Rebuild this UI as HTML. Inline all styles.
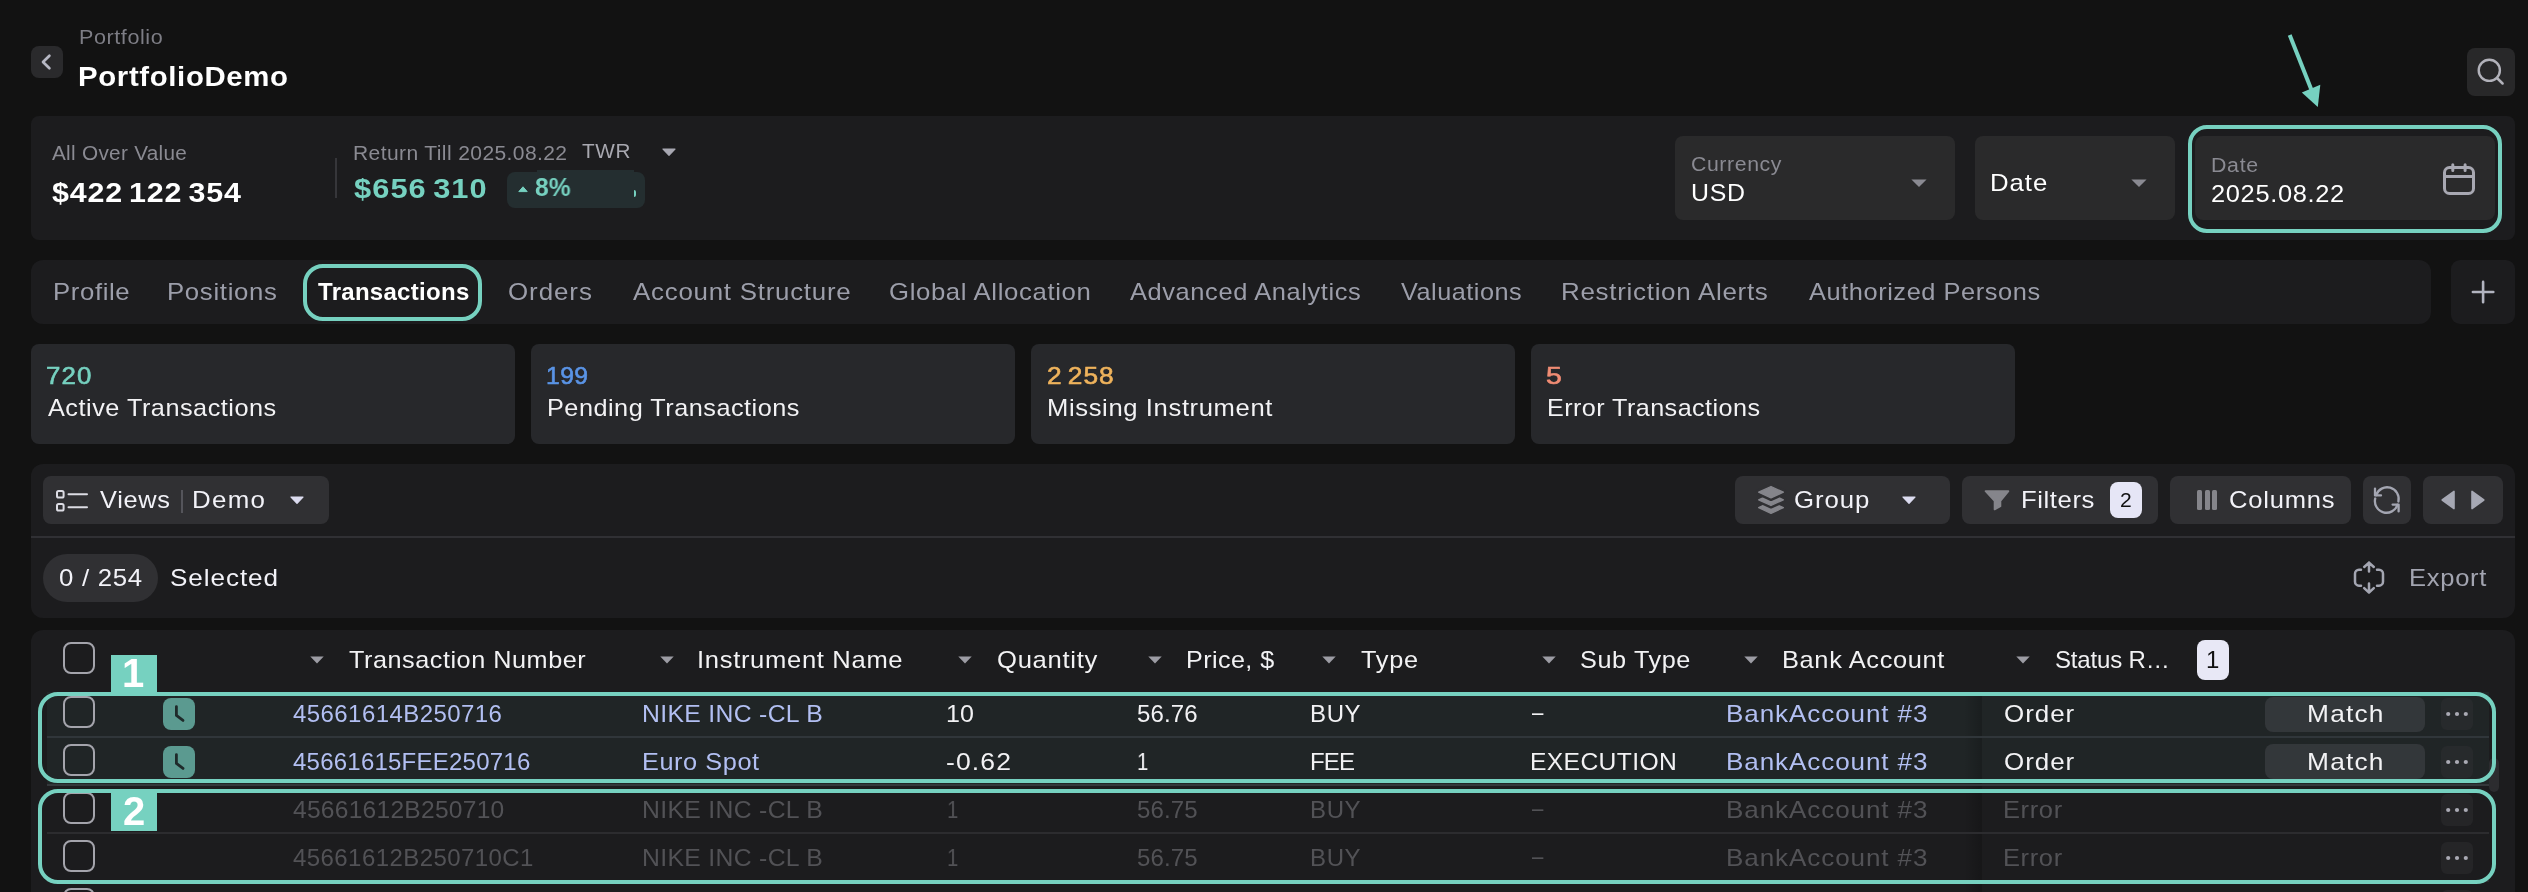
<!DOCTYPE html>
<html lang="en"><head><meta charset="utf-8"><title>PortfolioDemo – Transactions</title>
<style>
html,body{margin:0;padding:0;background:#121212;}
#app{display:block;position:relative;width:2528px;height:892px;overflow:hidden;background:#121212;font-family:"Liberation Sans",sans-serif;}
.b{position:absolute;box-sizing:border-box;}
.t{position:absolute;white-space:pre;transform-origin:0 0;will-change:transform;font-family:"Liberation Sans",sans-serif;}
.panel{background:#1c1c1e;}
.inp{background:#2a2a2b;border-radius:8px;}
.card{background:#27282b;border-radius:8px;top:344px;height:100px;width:484px;}
.btn{background:#303033;border-radius:8px;top:476px;height:48px;}
.hl{border:4px solid #76d1c0;}
.cb{width:32px;height:32px;left:63px;border:2px solid #a4a4ac;border-radius:8px;}
.sep{height:2px;background:#2c2c2f;left:47px;width:2442px;}
.dots{width:32px;height:32px;left:2441px;border-radius:6px;background:#252527;}
.match{left:2265px;width:160px;height:35px;border-radius:8px;background:#33373a;}
.clk{left:163px;width:32px;height:32px;border-radius:8px;background:#5b9a90;}
svg{position:absolute;overflow:visible;}

</style></head>
<body>
<main id="app">
<header class="page-header">
<!-- header -->
<div class="b" style="left:31px;top:46px;width:32px;height:32px;border-radius:8px;background:#2a2a2c;"></div>
<svg style="left:31px;top:46px" width="32" height="32" viewBox="0 0 32 32"><path d="M18.4 9.7 L12 16 L18.4 22.3" fill="none" stroke="#b6b8c4" stroke-width="2.7" stroke-linecap="round" stroke-linejoin="round"/></svg>
<div class="b" style="left:2467px;top:48px;width:48px;height:48px;border-radius:8px;background:#282829;"></div>
<svg style="left:2467px;top:48px" width="48" height="48" viewBox="0 0 48 48"><circle cx="22.3" cy="22.3" r="10.6" fill="none" stroke="#b2b2ba" stroke-width="2.4"/><path d="M30 30 L35.6 35.5" stroke="#b2b2ba" stroke-width="2.5" stroke-linecap="round"/></svg>
<!-- pointer arrow -->
<svg style="left:0;top:0" width="2528" height="140" viewBox="0 0 2528 140"><path d="M2289.7 35 L2311.5 90" stroke="#76d1c0" stroke-width="4" fill="none"/><path d="M2301.8 92.5 L2320.3 84.7 L2317.8 107 Z" fill="#76d1c0"/></svg>
<span class="t" style="left:78.6px;top:27.1px;font-size:20px;line-height:20px;color:#7d7d85;letter-spacing:0.53px;transform:scaleX(1.078);">Portfolio</span>
<span class="t" style="left:78.4px;top:62.5px;font-size:28px;line-height:28px;color:#ffffff;font-weight:700;letter-spacing:0.61px;transform:scaleX(1.049);">PortfolioDemo</span>
</header>
<section class="summary">
<!-- summary panel -->
<div class="b panel" style="left:31px;top:116px;width:2484px;height:124px;border-radius:8px;"></div>
<div class="b" style="left:335px;top:158px;width:2px;height:40px;background:#36363a;"></div>
<svg style="left:662px;top:148px" width="14" height="8" viewBox="0 0 14 8"><path d="M1 1 L13 1 L7 7.3 Z" fill="#a8a8b2" stroke="#a8a8b2" stroke-width="1.2" stroke-linejoin="round"/></svg>
<div class="b" style="left:507px;top:172px;width:138px;height:36px;border-radius:8px;background:#242e30;"></div>
<div class="b" style="left:537px;top:170px;width:97px;height:4px;background:#242e30;"></div>
<svg style="left:518px;top:186px" width="10" height="6" viewBox="0 0 10 6"><path d="M0.8 5.6 L5 0.8 L9.2 5.6 Z" fill="#76d1c0" stroke="#76d1c0" stroke-width="1" stroke-linejoin="round"/></svg>
<div class="b" style="left:633.6px;top:189.6px;width:2.4px;height:7px;border-radius:0 3px 3px 0;background:#76d1c0;"></div>
<div class="b inp" style="left:1675px;top:136px;width:280px;height:84px;"></div>
<svg style="left:1911px;top:179px" width="16" height="8" viewBox="0 0 16 8"><path d="M0.4 0.4 L15.6 0.4 L8 8 Z" fill="#8a8a92"/></svg>
<div class="b inp" style="left:1975px;top:136px;width:200px;height:84px;"></div>
<svg style="left:2131px;top:179px" width="16" height="8" viewBox="0 0 16 8"><path d="M0.4 0.4 L15.6 0.4 L8 8 Z" fill="#8a8a92"/></svg>
<div class="b inp" style="left:2195px;top:136px;width:300px;height:84px;"></div>
<div class="b hl" style="left:2188px;top:124.5px;width:314px;height:108px;border-radius:19px;"></div>
<svg style="left:2443px;top:163px" width="32" height="32" viewBox="0 0 32 32" fill="none" stroke="#a8a8b2" stroke-width="3" stroke-linecap="round"><rect x="1.5" y="4.5" width="29" height="26" rx="5"/><path d="M2 13.4 H30"/><path d="M9.8 1.7 V7.4 M22.1 1.7 V7.4"/></svg>
<span class="t" style="left:51.8px;top:143.1px;font-size:20px;line-height:20px;color:#8a8a92;letter-spacing:0.28px;transform:scaleX(1.037);">All Over Value</span>
<span class="t" style="left:51.7px;top:177.8px;font-size:28.5px;line-height:28.5px;color:#ffffff;font-weight:700;letter-spacing:0.79px;transform:scaleX(1.067);word-spacing:-3px;">$422 122 354</span>
<span class="t" style="left:352.6px;top:143.1px;font-size:20px;line-height:20px;color:#8a8a92;letter-spacing:0.37px;transform:scaleX(1.052);">Return Till 2025.08.22</span>
<span class="t" style="left:581.5px;top:141.1px;font-size:20px;line-height:20px;color:#a8a8b0;letter-spacing:0.64px;transform:scaleX(1.036);">TWR</span>
<span class="t" style="left:353.6px;top:173.8px;font-size:28.5px;line-height:28.5px;color:#76d1c0;font-weight:700;letter-spacing:0.99px;transform:scaleX(1.080);word-spacing:-3px;">$656 310</span>
<span class="t" style="left:535.1px;top:174.6px;font-size:25px;line-height:25px;color:#76d1c0;font-weight:700;transform:scaleX(0.983);">8%</span>
<span class="t" style="left:1690.8px;top:154.1px;font-size:20px;line-height:20px;color:#8a8a92;letter-spacing:0.56px;transform:scaleX(1.063);">Currency</span>
<span class="t" style="left:1690.6px;top:180.6px;font-size:24px;line-height:24px;color:#ffffff;letter-spacing:0.68px;transform:scaleX(1.036);">USD</span>
<span class="t" style="left:1989.9px;top:170.6px;font-size:24px;line-height:24px;color:#ffffff;letter-spacing:0.89px;transform:scaleX(1.073);">Date</span>
<span class="t" style="left:2210.8px;top:155.1px;font-size:20px;line-height:20px;color:#8a8a92;letter-spacing:0.67px;transform:scaleX(1.066);">Date</span>
<span class="t" style="left:2210.8px;top:181.6px;font-size:24px;line-height:24px;color:#ffffff;letter-spacing:0.61px;transform:scaleX(1.060);">2025.08.22</span>
</section>
<nav class="tabs">
<!-- tabs -->
<div class="b panel" style="left:31px;top:260px;width:2400px;height:64px;border-radius:12px;"></div>
<div class="b hl" style="left:303px;top:264px;width:179px;height:57px;border-radius:20px;"></div>
<div class="b panel" style="left:2451px;top:260px;width:64px;height:64px;border-radius:9px;"></div>
<svg style="left:2472px;top:281px" width="22" height="22" viewBox="0 0 22 22"><path d="M11.1 0.9 V21.3 M0.9 11 H21.3" stroke="#b2b4c0" stroke-width="2.6" stroke-linecap="round" fill="none"/></svg>
<span class="t" style="left:52.5px;top:279.6px;font-size:24px;line-height:24px;color:#9c9eaa;letter-spacing:0.59px;transform:scaleX(1.071);">Profile</span>
<span class="t" style="left:167.4px;top:279.6px;font-size:24px;line-height:24px;color:#9c9eaa;letter-spacing:0.65px;transform:scaleX(1.072);">Positions</span>
<span class="t" style="left:508.4px;top:279.6px;font-size:24px;line-height:24px;color:#9c9eaa;letter-spacing:0.86px;transform:scaleX(1.080);">Orders</span>
<span class="t" style="left:632.5px;top:279.6px;font-size:24px;line-height:24px;color:#9c9eaa;letter-spacing:0.70px;transform:scaleX(1.078);">Account Structure</span>
<span class="t" style="left:889.2px;top:279.6px;font-size:24px;line-height:24px;color:#9c9eaa;letter-spacing:0.60px;transform:scaleX(1.071);">Global Allocation</span>
<span class="t" style="left:1130.4px;top:279.6px;font-size:24px;line-height:24px;color:#9c9eaa;letter-spacing:0.56px;transform:scaleX(1.060);">Advanced Analytics</span>
<span class="t" style="left:1401.4px;top:279.6px;font-size:24px;line-height:24px;color:#9c9eaa;letter-spacing:0.49px;transform:scaleX(1.052);">Valuations</span>
<span class="t" style="left:1560.8px;top:279.6px;font-size:24px;line-height:24px;color:#9c9eaa;letter-spacing:0.65px;transform:scaleX(1.082);">Restriction Alerts</span>
<span class="t" style="left:1808.8px;top:279.6px;font-size:24px;line-height:24px;color:#9c9eaa;letter-spacing:0.54px;transform:scaleX(1.057);">Authorized Persons</span>
<span class="t" style="left:317.7px;top:279.6px;font-size:24px;line-height:24px;color:#ffffff;font-weight:700;letter-spacing:0.29px;">Transactions</span>
</nav>
<section class="cards">
<!-- cards -->
<div class="b card" style="left:31px;"></div>
<div class="b card" style="left:531px;"></div>
<div class="b card" style="left:1031px;"></div>
<div class="b card" style="left:1531px;"></div>
<span class="t" style="left:45.9px;top:363.6px;font-size:24px;line-height:24px;color:#76d1c0;letter-spacing:1.09px;transform:scaleX(1.076);-webkit-text-stroke:0.6px #76d1c0;">720</span>
<span class="t" style="left:47.5px;top:395.6px;font-size:24px;line-height:24px;color:#f2f2f4;letter-spacing:0.48px;transform:scaleX(1.053);">Active Transactions</span>
<span class="t" style="left:545.6px;top:363.6px;font-size:24px;line-height:24px;color:#5a94e6;letter-spacing:0.42px;transform:scaleX(1.028);-webkit-text-stroke:0.6px #5a94e6;">199</span>
<span class="t" style="left:546.9px;top:395.6px;font-size:24px;line-height:24px;color:#f2f2f4;letter-spacing:0.48px;transform:scaleX(1.052);">Pending Transactions</span>
<span class="t" style="left:1046.7px;top:363.6px;font-size:24px;line-height:24px;color:#efb35c;letter-spacing:0.97px;transform:scaleX(1.095);-webkit-text-stroke:0.6px #efb35c;word-spacing:-3px;">2 258</span>
<span class="t" style="left:1046.9px;top:395.6px;font-size:24px;line-height:24px;color:#f2f2f4;letter-spacing:0.59px;transform:scaleX(1.066);">Missing Instrument</span>
<span class="t" style="left:1546.4px;top:363.6px;font-size:24px;line-height:24px;color:#f08c74;transform:scaleX(1.185);-webkit-text-stroke:0.6px #f08c74;">5</span>
<span class="t" style="left:1546.9px;top:395.6px;font-size:24px;line-height:24px;color:#f2f2f4;letter-spacing:0.42px;transform:scaleX(1.048);">Error Transactions</span>
</section>
<section class="toolbar">
<!-- toolbar -->
<div class="b panel" style="left:31px;top:464px;width:2484px;height:154px;border-radius:12px;"></div>
<div class="b" style="left:31px;top:536px;width:2484px;height:2px;background:#303034;"></div>
<div class="b btn" style="left:43px;width:286px;"></div>
<svg style="left:56px;top:490px" width="32" height="22" viewBox="0 0 32 22" fill="none" stroke="#dcdce4" stroke-width="2"><rect x="1" y="1" width="6.6" height="6.6" rx="1.6"/><rect x="1" y="14" width="6.6" height="6.6" rx="1.6"/><path d="M12.5 4.3 H31 M12.5 17.3 H31" stroke-linecap="round"/></svg>
<div class="b" style="left:180.5px;top:490px;width:2px;height:23px;background:#55555b;"></div>
<svg style="left:290px;top:496px" width="14" height="8" viewBox="0 0 14 8"><path d="M1 1 L13 1 L7 7.4 Z" fill="#dcdcf0" stroke="#dcdcf0" stroke-width="1.2" stroke-linejoin="round"/></svg>
<div class="b" style="left:43px;top:554px;width:115px;height:48px;border-radius:24px;background:#303033;"></div>

<div class="b btn" style="left:1735px;width:215px;"></div>
<svg style="left:1757px;top:486px" width="28" height="28" viewBox="0 0 28 28" stroke-linejoin="round"><path d="M14 15.600000000000001 L27 21.6 L14 27.6 L1 21.6 Z" fill="#85858b" stroke="#85858b" stroke-width="1.4" transform="translate(14 21.6) scale(0.95) translate(-14 -21.6)"/><path d="M14 7.800000000000001 L27 13.8 L14 19.8 L1 13.8 Z" fill="#303033" stroke="#303033" stroke-width="5.6"/><path d="M14 7.800000000000001 L27 13.8 L14 19.8 L1 13.8 Z" fill="#85858b" stroke="#85858b" stroke-width="1.4" transform="translate(14 13.8) scale(0.95) translate(-14 -13.8)"/><path d="M14 0.20000000000000018 L27 6.2 L14 12.2 L1 6.2 Z" fill="#303033" stroke="#303033" stroke-width="5.6"/><path d="M14 0.20000000000000018 L27 6.2 L14 12.2 L1 6.2 Z" fill="#85858b" stroke="#85858b" stroke-width="1.4" transform="translate(14 6.2) scale(0.95) translate(-14 -6.2)"/></svg>
<svg style="left:1902px;top:496px" width="14" height="8" viewBox="0 0 14 8"><path d="M1 1 L13 1 L7 7.4 Z" fill="#dcdcf0" stroke="#dcdcf0" stroke-width="1.2" stroke-linejoin="round"/></svg>
<div class="b btn" style="left:1962px;width:196px;"></div>
<svg style="left:1984px;top:490px" width="26" height="21" viewBox="0 0 26 21"><path d="M1.6 1.2 H24.4 L16.4 11 V16.2 L10.6 19.4 V11 Z" fill="#85858b" stroke="#85858b" stroke-width="1.8" stroke-linejoin="round"/></svg>
<div class="b" style="left:2110px;top:482px;width:32px;height:36px;border-radius:8px;background:#e6e6f6;"></div>
<div class="b btn" style="left:2170px;width:181px;"></div>
<div class="b" style="left:2197px;top:490px;width:5px;height:20px;border-radius:1.5px;background:#85858b;"></div>
<div class="b" style="left:2204.5px;top:490px;width:5px;height:20px;border-radius:1.5px;background:#85858b;"></div>
<div class="b" style="left:2212px;top:490px;width:5px;height:20px;border-radius:1.5px;background:#85858b;"></div>
<div class="b btn" style="left:2363px;width:48px;"></div>
<svg style="left:0;top:0" width="2528" height="892" viewBox="0 0 2528 892" fill="none" stroke="#a4a6b2" stroke-width="2.3" stroke-linecap="round" stroke-linejoin="round"><path d="M2398.4 501.5 A11.6 11.6 0 0 0 2376.1 495.2"/><path d="M2375 488.6 V495.4 H2381"/><path d="M2375.2 498.5 A11.6 11.6 0 0 0 2397.5 504.8"/><path d="M2398.6 511.4 V504.6 H2392.6"/></svg>
<div class="b btn" style="left:2423px;width:80px;"></div>
<svg style="left:2441px;top:490px" width="14" height="20" viewBox="0 0 14 20"><path d="M13 1.4 V18.6 L1.2 10 Z" fill="#a6a8b4" stroke="#a6a8b4" stroke-width="1.6" stroke-linejoin="round"/></svg>
<svg style="left:2471px;top:490px" width="14" height="20" viewBox="0 0 14 20"><path d="M1 1.4 V18.6 L12.8 10 Z" fill="#a6a8b4" stroke="#a6a8b4" stroke-width="1.6" stroke-linejoin="round"/></svg>
<!-- export icon -->
<svg style="left:2353px;top:560px" width="32" height="35" viewBox="0 0 32 35" fill="none" stroke="#a4a6b2" stroke-width="2.5" stroke-linecap="round" stroke-linejoin="round"><path d="M16 2.6 V11.6 M11.2 7 L16 2.6 L20.8 7"/><path d="M16 32.6 V23.6 M11.2 28.2 L16 32.6 L20.8 28.2"/><path d="M8 9.75 H6 A4 4 0 0 0 2 13.75 V21.65 A4 4 0 0 0 6 25.65 H8"/><path d="M24 9.75 H26 A4 4 0 0 1 30 13.75 V21.65 A4 4 0 0 1 26 25.65 H24"/></svg>
<span class="t" style="left:99.9px;top:487.6px;font-size:24px;line-height:24px;color:#f2f2f8;letter-spacing:0.68px;transform:scaleX(1.056);">Views</span>
<span class="t" style="left:191.8px;top:487.6px;font-size:24px;line-height:24px;color:#f2f2f8;letter-spacing:1.20px;transform:scaleX(1.078);">Demo</span>
<span class="t" style="left:58.8px;top:565.5px;font-size:24px;line-height:24px;color:#f2f2f8;letter-spacing:0.67px;transform:scaleX(1.074);">0 / 254</span>
<span class="t" style="left:169.7px;top:565.5px;font-size:24px;line-height:24px;color:#f2f2f8;letter-spacing:0.85px;transform:scaleX(1.087);">Selected</span>
<span class="t" style="left:1794.3px;top:487.6px;font-size:24px;line-height:24px;color:#f2f2f8;letter-spacing:0.90px;transform:scaleX(1.073);">Group</span>
<span class="t" style="left:2020.5px;top:487.6px;font-size:24px;line-height:24px;color:#f2f2f8;letter-spacing:0.55px;transform:scaleX(1.069);">Filters</span>
<span class="t" style="left:2120.1px;top:490.1px;font-size:20px;line-height:20px;color:#111111;transform:scaleX(1.053);">2</span>
<span class="t" style="left:2229.3px;top:487.6px;font-size:24px;line-height:24px;color:#f2f2f8;letter-spacing:0.75px;transform:scaleX(1.063);">Columns</span>
<span class="t" style="left:2408.8px;top:565.5px;font-size:24px;line-height:24px;color:#a2a4b0;letter-spacing:0.67px;transform:scaleX(1.064);">Export</span>
</section>
<section class="grid">
<!-- table -->
<div class="b panel" style="left:31px;top:630px;width:2484px;height:280px;border-radius:12px;"></div>
<!-- highlighted rows bg -->
<div class="b" style="left:47px;top:692px;width:2442px;height:93px;background:#202526;"></div>
<!-- pinned col shadow -->
<div class="b" style="left:1964px;top:694px;width:18px;height:198px;background:linear-gradient(90deg,rgba(0,0,0,0),rgba(0,0,0,0.2));"></div>
<div class="b sep" style="top:736px;background:#30363a;"></div>
<div class="b sep" style="top:784px;background:#34383b;"></div>
<div class="b sep" style="top:832px;"></div>
<div class="b sep" style="top:880px;"></div>
<!-- scroll thumb -->
<div class="b" style="left:2489px;top:758px;width:10px;height:34px;border-radius:5px;background:#2c2c2f;"></div>
<!-- checkboxes -->
<div class="b cb" style="top:642px;"></div>
<div class="b cb" style="top:696px;"></div>
<div class="b cb" style="top:744px;"></div>
<div class="b cb" style="top:792px;"></div>
<div class="b cb" style="top:840px;"></div>
<div class="b cb" style="top:888px;"></div>
<!-- header carets -->
<svg style="left:310px;top:656px" width="14" height="8" viewBox="0 0 14 8"><path d="M0.3 0.4 L13.7 0.4 L7 7.6 Z" fill="#9c9ca4"/></svg>
<svg style="left:660px;top:656px" width="14" height="8" viewBox="0 0 14 8"><path d="M0.3 0.4 L13.7 0.4 L7 7.6 Z" fill="#9c9ca4"/></svg>
<svg style="left:958px;top:656px" width="14" height="8" viewBox="0 0 14 8"><path d="M0.3 0.4 L13.7 0.4 L7 7.6 Z" fill="#9c9ca4"/></svg>
<svg style="left:1148px;top:656px" width="14" height="8" viewBox="0 0 14 8"><path d="M0.3 0.4 L13.7 0.4 L7 7.6 Z" fill="#9c9ca4"/></svg>
<svg style="left:1322px;top:656px" width="14" height="8" viewBox="0 0 14 8"><path d="M0.3 0.4 L13.7 0.4 L7 7.6 Z" fill="#9c9ca4"/></svg>
<svg style="left:1542px;top:656px" width="14" height="8" viewBox="0 0 14 8"><path d="M0.3 0.4 L13.7 0.4 L7 7.6 Z" fill="#9c9ca4"/></svg>
<svg style="left:1744px;top:656px" width="14" height="8" viewBox="0 0 14 8"><path d="M0.3 0.4 L13.7 0.4 L7 7.6 Z" fill="#9c9ca4"/></svg>
<svg style="left:2016px;top:656px" width="14" height="8" viewBox="0 0 14 8"><path d="M0.3 0.4 L13.7 0.4 L7 7.6 Z" fill="#9c9ca4"/></svg>
<div class="b" style="left:2197px;top:640px;width:32px;height:40px;border-radius:8px;background:#e8e8f6;"></div>
<!-- clock icons -->
<div class="b clk" style="top:698px;"></div>
<svg style="left:163px;top:698px" width="32" height="32" viewBox="0 0 32 32"><path d="M13.4 8.6 V17.4 L20 22.4" fill="none" stroke="#1f2a2a" stroke-width="2.8" stroke-linecap="round" stroke-linejoin="round"/></svg>
<div class="b clk" style="top:746px;"></div>
<svg style="left:163px;top:746px" width="32" height="32" viewBox="0 0 32 32"><path d="M13.4 8.6 V17.4 L20 22.4" fill="none" stroke="#1f2a2a" stroke-width="2.8" stroke-linecap="round" stroke-linejoin="round"/></svg>
<!-- match buttons -->
<div class="b match" style="top:697px;"></div>
<div class="b match" style="top:744px;"></div>
<!-- dots buttons -->
<div class="b dots" style="top:698px;background:#272a2c;"></div>
<div class="b dots" style="top:746px;background:#272a2c;"></div>
<div class="b dots" style="top:794px;"></div>
<div class="b dots" style="top:842px;"></div>
<div class="b dots" style="top:890px;"></div>
<svg style="left:2441px;top:698px" width="32" height="32" viewBox="0 0 32 32" fill="#aaaab4"><circle cx="7.2" cy="16" r="2.1"/><circle cx="16" cy="16" r="2.1"/><circle cx="24.8" cy="16" r="2.1"/></svg>
<svg style="left:2441px;top:746px" width="32" height="32" viewBox="0 0 32 32" fill="#aaaab4"><circle cx="7.2" cy="16" r="2.1"/><circle cx="16" cy="16" r="2.1"/><circle cx="24.8" cy="16" r="2.1"/></svg>
<svg style="left:2441px;top:794px" width="32" height="32" viewBox="0 0 32 32" fill="#aaaab4"><circle cx="7.2" cy="16" r="2.1"/><circle cx="16" cy="16" r="2.1"/><circle cx="24.8" cy="16" r="2.1"/></svg>
<svg style="left:2441px;top:842px" width="32" height="32" viewBox="0 0 32 32" fill="#aaaab4"><circle cx="7.2" cy="16" r="2.1"/><circle cx="16" cy="16" r="2.1"/><circle cx="24.8" cy="16" r="2.1"/></svg>
<!-- annotation badges -->
<div class="b" style="left:111px;top:655px;width:46px;height:38px;background:#76d1c0;"></div>
<div class="b" style="left:111px;top:791px;width:46px;height:40px;background:#76d1c0;"></div>
<!-- annotation boxes -->
<div class="b hl" style="left:38px;top:692px;width:2458px;height:91px;border-radius:20px;"></div>
<div class="b hl" style="left:38px;top:789px;width:2458px;height:95px;border-radius:20px;"></div>
<span class="t" style="left:349.1px;top:647.5px;font-size:24px;line-height:24px;color:#f2f2f4;letter-spacing:0.51px;transform:scaleX(1.051);">Transaction Number</span>
<span class="t" style="left:697.3px;top:647.5px;font-size:24px;line-height:24px;color:#f2f2f4;letter-spacing:0.64px;transform:scaleX(1.065);">Instrument Name</span>
<span class="t" style="left:996.7px;top:647.5px;font-size:24px;line-height:24px;color:#f2f2f4;letter-spacing:0.66px;transform:scaleX(1.068);">Quantity</span>
<span class="t" style="left:1185.7px;top:647.5px;font-size:24px;line-height:24px;color:#f2f2f4;letter-spacing:0.41px;transform:scaleX(1.046);">Price, $</span>
<span class="t" style="left:1360.7px;top:647.5px;font-size:24px;line-height:24px;color:#f2f2f4;letter-spacing:0.72px;transform:scaleX(1.055);">Type</span>
<span class="t" style="left:1580.4px;top:647.5px;font-size:24px;line-height:24px;color:#f2f2f4;letter-spacing:0.57px;transform:scaleX(1.052);">Sub Type</span>
<span class="t" style="left:1782.1px;top:647.5px;font-size:24px;line-height:24px;color:#f2f2f4;letter-spacing:0.60px;transform:scaleX(1.059);">Bank Account</span>
<span class="t" style="left:2054.6px;top:647.5px;font-size:24px;line-height:24px;color:#f2f2f4;letter-spacing:-0.17px;">Status R…</span>
<span class="t" style="left:2206.2px;top:647.5px;font-size:24px;line-height:24px;color:#111111;transform:scaleX(0.965);">1</span>
<span class="t" style="left:292.7px;top:701.5px;font-size:24px;line-height:24px;color:#b2bff2;letter-spacing:0.43px;">45661614B250716</span>
<span class="t" style="left:642.2px;top:701.5px;font-size:24px;line-height:24px;color:#b2bff2;letter-spacing:0.32px;transform:scaleX(1.031);">NIKE INC -CL B</span>
<span class="t" style="left:945.7px;top:701.5px;font-size:24px;line-height:24px;color:#f2f2f4;transform:scaleX(1.044);">10</span>
<span class="t" style="left:1137.0px;top:701.5px;font-size:24px;line-height:24px;color:#f2f2f4;letter-spacing:0.14px;">56.76</span>
<span class="t" style="left:1310.3px;top:701.5px;font-size:24px;line-height:24px;color:#f2f2f4;letter-spacing:0.62px;">BUY</span>
<span class="t" style="left:1531.8px;top:699.5px;font-size:24px;line-height:24px;color:#f2f2f4;transform:scaleX(0.850);">–</span>
<span class="t" style="left:1725.7px;top:701.5px;font-size:24px;line-height:24px;color:#b2bff2;letter-spacing:0.84px;transform:scaleX(1.085);">BankAccount #3</span>
<span class="t" style="left:2004.2px;top:701.5px;font-size:24px;line-height:24px;color:#f2f2f4;letter-spacing:0.91px;transform:scaleX(1.081);">Order</span>
<span class="t" style="left:2306.5px;top:701.5px;font-size:24px;line-height:24px;color:#f2f2f4;letter-spacing:1.11px;transform:scaleX(1.096);">Match</span>
<span class="t" style="left:292.7px;top:749.5px;font-size:24px;line-height:24px;color:#b2bff2;letter-spacing:0.23px;">45661615FEE250716</span>
<span class="t" style="left:642.1px;top:749.5px;font-size:24px;line-height:24px;color:#b2bff2;letter-spacing:0.55px;transform:scaleX(1.054);">Euro Spot</span>
<span class="t" style="left:946.4px;top:749.5px;font-size:24px;line-height:24px;color:#f2f2f4;letter-spacing:1.02px;transform:scaleX(1.105);">-0.62</span>
<span class="t" style="left:1137.4px;top:749.5px;font-size:24px;line-height:24px;color:#f2f2f4;transform:scaleX(0.850);">1</span>
<span class="t" style="left:1310.3px;top:749.5px;font-size:24px;line-height:24px;color:#f2f2f4;letter-spacing:-0.84px;">FEE</span>
<span class="t" style="left:1529.8px;top:749.5px;font-size:24px;line-height:24px;color:#f2f2f4;letter-spacing:0.36px;transform:scaleX(1.027);">EXECUTION</span>
<span class="t" style="left:1725.7px;top:749.5px;font-size:24px;line-height:24px;color:#b2bff2;letter-spacing:0.84px;transform:scaleX(1.085);">BankAccount #3</span>
<span class="t" style="left:2004.2px;top:749.5px;font-size:24px;line-height:24px;color:#f2f2f4;letter-spacing:0.91px;transform:scaleX(1.081);">Order</span>
<span class="t" style="left:2306.5px;top:749.5px;font-size:24px;line-height:24px;color:#f2f2f4;letter-spacing:1.11px;transform:scaleX(1.096);">Match</span>
<span class="t" style="left:292.7px;top:797.5px;font-size:24px;line-height:24px;color:#525256;letter-spacing:0.26px;transform:scaleX(1.023);">45661612B250710</span>
<span class="t" style="left:642.2px;top:797.5px;font-size:24px;line-height:24px;color:#525256;letter-spacing:0.32px;transform:scaleX(1.031);">NIKE INC -CL B</span>
<span class="t" style="left:947.4px;top:797.5px;font-size:24px;line-height:24px;color:#525256;transform:scaleX(0.850);">1</span>
<span class="t" style="left:1137.0px;top:797.5px;font-size:24px;line-height:24px;color:#525256;letter-spacing:0.13px;">56.75</span>
<span class="t" style="left:1310.3px;top:797.5px;font-size:24px;line-height:24px;color:#525256;letter-spacing:0.62px;">BUY</span>
<span class="t" style="left:1531.8px;top:795.5px;font-size:24px;line-height:24px;color:#525256;transform:scaleX(0.850);">–</span>
<span class="t" style="left:1725.7px;top:797.5px;font-size:24px;line-height:24px;color:#525256;letter-spacing:0.84px;transform:scaleX(1.085);">BankAccount #3</span>
<span class="t" style="left:2003.3px;top:797.5px;font-size:24px;line-height:24px;color:#525256;letter-spacing:0.60px;transform:scaleX(1.061);">Error</span>
<span class="t" style="left:292.7px;top:845.5px;font-size:24px;line-height:24px;color:#525256;letter-spacing:0.43px;">45661612B250710C1</span>
<span class="t" style="left:642.2px;top:845.5px;font-size:24px;line-height:24px;color:#525256;letter-spacing:0.32px;transform:scaleX(1.031);">NIKE INC -CL B</span>
<span class="t" style="left:947.4px;top:845.5px;font-size:24px;line-height:24px;color:#525256;transform:scaleX(0.850);">1</span>
<span class="t" style="left:1137.0px;top:845.5px;font-size:24px;line-height:24px;color:#525256;letter-spacing:0.13px;">56.75</span>
<span class="t" style="left:1310.3px;top:845.5px;font-size:24px;line-height:24px;color:#525256;letter-spacing:0.62px;">BUY</span>
<span class="t" style="left:1531.8px;top:843.5px;font-size:24px;line-height:24px;color:#525256;transform:scaleX(0.850);">–</span>
<span class="t" style="left:1725.7px;top:845.5px;font-size:24px;line-height:24px;color:#525256;letter-spacing:0.84px;transform:scaleX(1.085);">BankAccount #3</span>
<span class="t" style="left:2003.3px;top:845.5px;font-size:24px;line-height:24px;color:#525256;letter-spacing:0.60px;transform:scaleX(1.061);">Error</span>
<span class="t" style="left:122.3px;top:653.0px;font-size:40px;line-height:40px;color:#ffffff;font-weight:700;">1</span>
<span class="t" style="left:122.5px;top:791.0px;font-size:40px;line-height:40px;color:#ffffff;font-weight:700;">2</span>
</section>
</main>
</body></html>
